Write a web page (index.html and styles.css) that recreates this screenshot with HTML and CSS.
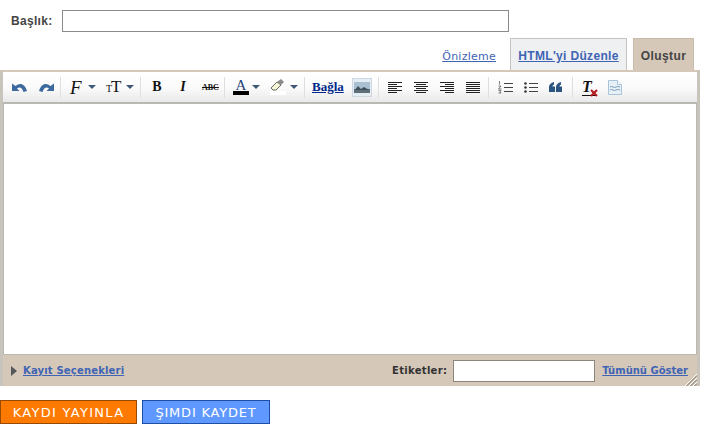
FILE: index.html
```html
<!DOCTYPE html>
<html lang="tr">
<head>
    <meta charset="UTF-8">
    <title>Kayıt Oluştur</title>
    <link rel="stylesheet" href="styles.css">
</head>
<body>

    <div class="title-row">
        <label class="title-label" for="postTitle">Başlık:</label>
        <input class="title-input" id="postTitle" type="text">
    </div>

    <div class="tabs">
        <a class="tab-preview" href="#">Önizleme</a>
        <a class="tab tab-html" href="#">HTML'yi Düzenle</a>
        <span class="tab tab-compose">Oluştur</span>
    </div>

    <div class="editor">
        <div class="toolbar">
            <div class="tool-group undo-group">
                <svg class="icon" width="15" height="11" viewBox="0 0 15 11"><path d="M0 1.500V9h7.500L5 6.500C7.500 4.500 10 5.500 11.500 10L15 9C13 2 8 0 3.500 4z" fill="#3d6a9e"/></svg>
                <svg class="icon" width="15" height="11" viewBox="0 0 15 11"><path d="M15 1.500V9H7.500L10 6.500C7.500 4.500 5 5.500 3.500 10L0 9C2 2 7 0 11.500 4z" fill="#3d6a9e"/></svg>
            </div>
            <div class="tool-group font-group">
                <span class="glyph glyph-font">F</span>
                <span class="caret"></span>
                <span class="glyph glyph-size"><small>T</small>T</span>
                <span class="caret"></span>
            </div>
            <div class="tool-group style-group">
                <span class="glyph glyph-bold">B</span>
                <span class="glyph glyph-italic">I</span>
                <span class="glyph glyph-strike">ABC</span>
            </div>
            <div class="tool-group color-group">
                <span class="color-tool">
                    <span class="glyph glyph-color">A</span>
                    <span class="swatch swatch-black"></span>
                </span>
                <span class="caret"></span>
                <span class="color-tool color-tool-pen">
                    <svg width="16" height="12" viewBox="0 0 16 12"><path d="M1 9l6-6 4 3-5 5H3z" fill="#f6f6d8" stroke="#6a6a60"/><path d="M7 3l4-3 3 3-3 3z" fill="#8a8a8a"/></svg>
                    <span class="swatch swatch-white"></span>
                </span>
                <span class="caret caret-pen"></span>
            </div>
            <div class="tool-group link-group">
                <a class="link-tool" href="#">Bağla</a>
                <span class="image-tool">
                    <svg width="16" height="11" viewBox="0 0 16 11"><rect width="16" height="11" fill="#a9c0d2"/><rect y="7" width="16" height="4" fill="#5d6e78"/><path d="M1 8l3-4 3 3 3-2 5 3z" fill="#3f505a"/></svg>
                </span>
            </div>
            <div class="tool-group align-group">
                <svg class="icon" width="14" height="11" viewBox="0 0 14 11"><path d="M0 .5h14M0 2.500h9M0 4.500h14M0 6.500h9M0 8.500h14M0 10.500h9" stroke="#222"/></svg>
                <svg class="icon" width="14" height="11" viewBox="0 0 14 11"><path d="M0 .5h14M2 2.500h10M0 4.500h14M2 6.500h10M0 8.500h14M2 10.500h10" stroke="#222"/></svg>
                <svg class="icon" width="14" height="11" viewBox="0 0 14 11"><path d="M0 .5h14M5 2.500h9M0 4.500h14M5 6.500h9M0 8.500h14M5 10.500h9" stroke="#222"/></svg>
                <svg class="icon" width="14" height="11" viewBox="0 0 14 11"><path d="M0 .5h14M0 2.500h14M0 4.500h14M0 6.500h14M0 8.500h14M0 10.500h14" stroke="#222"/></svg>
            </div>
            <div class="tool-group list-group">
                <svg class="icon" width="15" height="13" viewBox="0 0 15 13"><path d="M6 2.500h9M6 6.500h9M6 10.500h9" stroke="#444"/><path d="M1.500 0v3.500M.5 5h2.500L.5 8h3M.5 9.500h2.500l-1 1.200 1 1.300H.5" fill="none" stroke="#444" stroke-width=".7"/></svg>
                <svg class="icon" width="14" height="13" viewBox="0 0 14 13"><path d="M5 2.500h9M5 6.500h9M5 10.500h9" stroke="#444"/><circle cx="1.500" cy="2.500" r="1.300" fill="#333"/><circle cx="1.500" cy="6.500" r="1.300" fill="#333"/><circle cx="1.500" cy="10.500" r="1.300" fill="#333"/></svg>
                <svg class="icon" width="13" height="10" viewBox="0 0 13 10"><path d="M0 5C0 2.500 2 1 5 0v2.500C4 3 3.500 3.500 3.500 4.500H6V10H0zM7 5c0-2.500 2-4 5-5v2.500c-1 .5-1.500 1-1.500 2H13V10H7z" fill="#2c5480"/></svg>
            </div>
            <div class="tool-group clear-group">
                <span class="clear-tool">
                    <span class="glyph glyph-clear">T</span>
                    <svg class="clear-mark" width="8" height="8" viewBox="0 0 8 8"><path d="M1 1l6 6M7 1L1 7" stroke="#b3161b" stroke-width="2"/></svg>
                </span>
                <svg class="icon" width="14" height="15" viewBox="0 0 14 15"><path d="M.5.5h9l4 4v10H.5z" fill="#e6f0f8" stroke="#a9c4da"/><path d="M9.500.5v4h4" fill="#fff" stroke="#a9c4da"/><path d="M2 7q1.500-1 3 0t3 0 4 0M2 10q1.500-1 3 0t3 0 4 0" fill="none" stroke="#7f9db6"/></svg>
            </div>
        </div>

        <div class="edit-area"></div>

        <div class="options">
            <span class="options-arrow"></span>
            <a class="options-link" href="#">Kayıt Seçenekleri</a>
            <label class="tags-label" for="postTags">Etiketler:</label>
            <input class="tags-input" id="postTags" type="text">
            <a class="tags-link" href="#">Tümünü Göster</a>
            <svg class="grip" width="13" height="13" viewBox="0 0 13 13"><path d="M13 1L1 13M13 5L5 13M13 9l-4 4" stroke="#fff"/><path d="M13 2.500L2.500 13M13 6.500L6.500 13M13 10.500L10.500 13" stroke="#7f776b"/></svg>
        </div>
    </div>

    <div class="actions">
        <button class="action action-publish">KAYDI YAYINLA</button>
        <button class="action action-save">ŞIMDI KAYDET</button>
    </div>

</body>
</html>
```

FILE: styles.css
```css
* {
    margin: 0;
    padding: 0;
    box-sizing: border-box;
}

html, body {
    height: 424px;
    overflow: hidden;
}

body {
    font-family: 'Liberation Sans', Arial, sans-serif;
    background-color: #fff;
    color: #333;
    width: 722px;
}

a {
    color: #3f64b4;
}

.title-row {
    display: flex;
    align-items: center;
    height: 22px;
    margin-top: 10px;
    padding-left: 11px;
}

.title-label {
    width: 51px;
    font-size: 12px;
    font-weight: bold;
    letter-spacing: 0.3px;
    color: #444;
}

.title-input {
    width: 447px;
    height: 22px;
    border: 1px solid #8b8b8b;
    background: #fff;
}

.tabs {
    display: flex;
    align-items: flex-end;
    justify-content: flex-end;
    width: 694px;
    height: 32px;
    margin-top: 6px;
}

.tab-preview {
    align-self: center;
    margin-top: 4px;
    margin-right: 14px;
    font-family: 'DejaVu Sans', sans-serif;
    font-size: 11px;
    letter-spacing: 0.25px;
}

.tab {
    display: flex;
    align-items: center;
    justify-content: center;
    height: 32px;
    padding-top: 3px;
    font-size: 12px;
    font-weight: bold;
}

.tab-html {
    width: 117px;
    margin-right: 6px;
    letter-spacing: 0.33px;
    background: #eef0f2;
    border: 1px solid #c6c3bd;
    border-bottom: none;
}

.tab-compose {
    width: 61px;
    letter-spacing: 0.4px;
    background: #d5c8b8;
    border: 1px solid #c9bba9;
    border-bottom: none;
    color: #444;
}

.editor {
    position: relative;
    width: 700px;
    height: 316px;
    background: #d5c8b8;
    border-top: 2px solid #d5c8b8;
    border-left: 3px solid #c9c4bb;
    border-right: 3px solid #c9c4bb;
}

.toolbar {
    display: flex;
    align-items: center;
    height: 32px;
    padding-left: 8px;
    background: linear-gradient(#fff, #fbfbfb 50%, #e9e9e9);
    border-bottom: 2px solid #b9b9b3;
}

.tool-group {
    display: flex;
    flex: none;
    align-items: center;
    height: 21px;
    border-right: 1px solid #dfdfdf;
}

.icon {
    display: block;
    flex: none;
}

.undo-group {
    width: 50px;
    gap: 12px;
    padding-left: 1px;
}

.glyph {
    font-family: 'Liberation Serif', serif;
    color: #111;
}

.caret {
    flex: none;
    width: 0;
    height: 0;
    margin-left: 6px;
    border-top: 4px solid #3f5a78;
    border-left: 4px solid transparent;
    border-right: 4px solid transparent;
}

.font-group {
    width: 80px;
    padding-left: 9px;
}

.glyph-font {
    width: 12px;
    font-size: 19px;
    font-style: italic;
    line-height: 21px;
}

.glyph-size {
    width: 14px;
    margin-left: 10px;
    font-size: 17px;
    white-space: nowrap;
    letter-spacing: -1px;
}

.glyph-size small {
    font-size: 10px;
}

.style-group {
    width: 84px;
    padding-left: 3px;
}

.glyph-bold,
.glyph-italic {
    width: 26px;
    text-align: center;
    font-size: 14px;
    font-weight: bold;
}

.glyph-italic {
    font-style: italic;
}

.glyph-strike {
    margin-left: 6px;
    font-size: 8px;
    font-weight: bold;
    text-decoration: line-through;
}

.color-group {
    width: 80px;
    padding-left: 8px;
}

.color-group .caret {
    margin-left: 3px;
}

.color-group .caret-pen {
    margin-left: 4px;
}

.color-tool {
    display: flex;
    flex: none;
    flex-direction: column;
    align-items: center;
    width: 16px;
    line-height: 12px;
}

.color-tool-pen {
    margin-left: 10px;
}

.glyph-color {
    font-size: 15px;
    color: #23427a;
}

.swatch {
    display: block;
    width: 16px;
    height: 4px;
}

.swatch-black {
    background: #000;
}

.swatch-white {
    background: #fff;
}

.link-group {
    width: 74px;
    gap: 8px;
    padding-left: 7px;
}

.link-tool {
    font-family: 'Liberation Serif', serif;
    font-size: 13px;
    font-weight: bold;
    color: #00288a;
}

.image-tool {
    display: flex;
    flex: none;
    align-items: center;
    justify-content: center;
    width: 20px;
    height: 19px;
    border: 1px solid #cfd8e2;
    background: #e4ecf4;
}

.align-group {
    width: 110px;
    gap: 12px;
    padding-left: 9px;
}

.list-group {
    width: 84px;
    gap: 11px;
    padding-left: 9px;
}

.clear-group {
    gap: 11px;
    padding-left: 9px;
    border-right: none;
}

.clear-tool {
    position: relative;
    width: 15px;
    height: 18px;
    border-bottom: 1px solid #111;
}

.glyph-clear {
    font-size: 16px;
    font-weight: bold;
    font-style: italic;
    line-height: 16px;
}

.clear-mark {
    position: absolute;
    right: -1px;
    bottom: -2px;
}

.edit-area {
    height: 251px;
    background: #fff;
    border-left: 1px solid #b9b9b3;
    border-right: 1px solid #b9b9b3;
    border-bottom: 1px solid #b9b9b3;
}

.options {
    position: relative;
    display: flex;
    align-items: center;
    height: 31px;
    padding-left: 8px;
    font-family: 'DejaVu Sans', sans-serif;
    font-size: 10px;
    font-weight: bold;
}

.options-arrow {
    width: 0;
    height: 0;
    margin-right: 6px;
    border-left: 6px solid #54585c;
    border-top: 5px solid transparent;
    border-bottom: 5px solid transparent;
}

.options-link {
    flex: 1;
    letter-spacing: 0.18px;
}

.tags-label {
    margin-right: 6px;
    letter-spacing: 0.3px;
    color: #333;
}

.tags-input {
    width: 142px;
    height: 22px;
    margin-right: 7px;
    border: 1px solid #8b857b;
    background: #fff;
}

.tags-link {
    margin-right: 9px;
}

.grip {
    position: absolute;
    right: 0;
    bottom: 0;
}

.actions {
    display: flex;
    gap: 5px;
    margin-top: 14px;
}

.action {
    height: 24px;
    font-family: 'DejaVu Sans', sans-serif;
    font-size: 13px;
    color: #fff;
    letter-spacing: 0.8px;
}

.action-publish {
    width: 137px;
    letter-spacing: 1.3px;
    background: #ff7a00;
    border: 1px solid #9a4a00;
}

.action-save {
    width: 128px;
    background: #5f99ff;
    border: 1px solid #1e4fa6;
}
```
